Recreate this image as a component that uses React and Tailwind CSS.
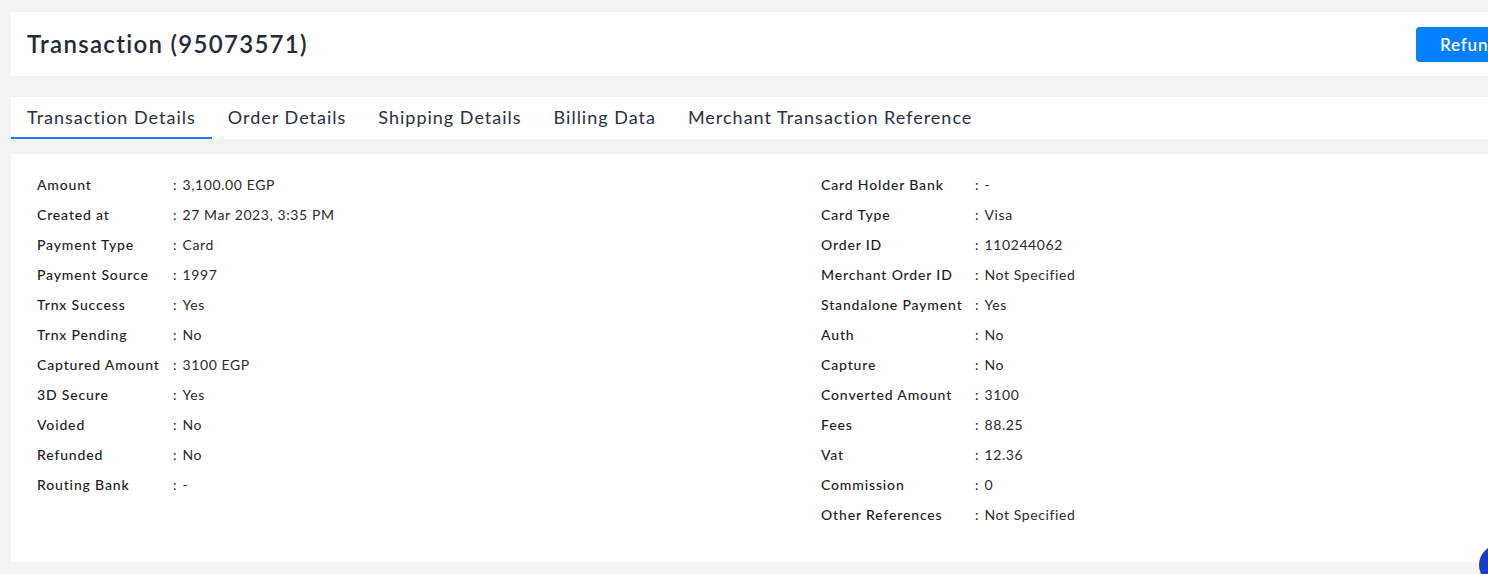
import { useState } from "react";

const leftRows = [
  ["Amount", "3,100.00 EGP"],
  ["Created at", "27 Mar 2023, 3:35 PM"],
  ["Payment Type", "Card"],
  ["Payment Source", "1997"],
  ["Trnx Success", "Yes"],
  ["Trnx Pending", "No"],
  ["Captured Amount", "3100 EGP"],
  ["3D Secure", "Yes"],
  ["Voided", "No"],
  ["Refunded", "No"],
  ["Routing Bank", "-"],
];

const rightRows = [
  ["Card Holder Bank", "-"],
  ["Card Type", "Visa"],
  ["Order ID", "110244062"],
  ["Merchant Order ID", "Not Specified"],
  ["Standalone Payment", "Yes"],
  ["Auth", "No"],
  ["Capture", "No"],
  ["Converted Amount", "3100"],
  ["Fees", "88.25"],
  ["Vat", "12.36"],
  ["Commission", "0"],
  ["Other References", "Not Specified"],
];

const tabs = [
  "Transaction Details",
  "Order Details",
  "Shipping Details",
  "Billing Data",
  "Merchant Transaction Reference",
];

const DetailRow = ({ label, value, labelWidth }) => (
  <div className="flex items-center h-[30px] text-[14px] text-[#1c1c1c]">
    <span className={`${labelWidth} font-medium tracking-[0.85px]`}>{label}</span>
    <span className="mr-[6px]">:</span>
    <span className="text-[#2a2a2a] tracking-[0.6px]">{value}</span>
  </div>
);

export default function App() {
  const [active, setActive] = useState(0);

  return (
    <div
      className="w-full h-[574px] overflow-hidden bg-[#f4f4f4]"
      style={{ fontFamily: "Lato, 'Open Sans', sans-serif" }}
    >
      <div className="w-[1560px] pl-[11px] pt-[12px]">
        {/* Header */}
        <div className="bg-white h-[64px] flex items-center pl-[16px]">
          <h1 className="w-[1389px] text-[24px] font-semibold text-[#232a3a] tracking-[1.3px]">
            Transaction (95073571)
          </h1>
          <button className="h-[35px] px-[24px] rounded-[4px] bg-[#0080ff] text-white text-[17px] font-semibold tracking-[0.8px] mt-[1px]">
            Refund
          </button>
        </div>

        {/* Tabs */}
        <div className="bg-white mt-[21px] h-[42px] flex items-stretch">
          {tabs.map((t, i) => (
            <button
              key={t}
              onClick={() => setActive(i)}
              className={`px-[16px] text-[18px] text-[#2b3140] tracking-[1px] border-b-2 ${
                active === i ? "border-[#1a7cf5]" : "border-transparent"
              }`}
            >
              {t}
            </button>
          ))}
        </div>

        {/* Details */}
        <div className="bg-white mt-[15px] h-[408px] pl-[26px] pt-[15px]">
          <div className="grid grid-cols-[784px_1fr]">
            <div>
              {leftRows.map(([l, v]) => (
                <DetailRow key={l} label={l} value={v} labelWidth="w-[136px]" />
              ))}
            </div>
            <div>
              {rightRows.map(([l, v]) => (
                <DetailRow key={l} label={l} value={v} labelWidth="w-[154px]" />
              ))}
            </div>
          </div>
        </div>
      </div>
      <div className="fixed left-[1479px] top-[545px] w-[40px] h-[40px] rounded-full bg-[#1a3cc8]" />
    </div>
  );
}
